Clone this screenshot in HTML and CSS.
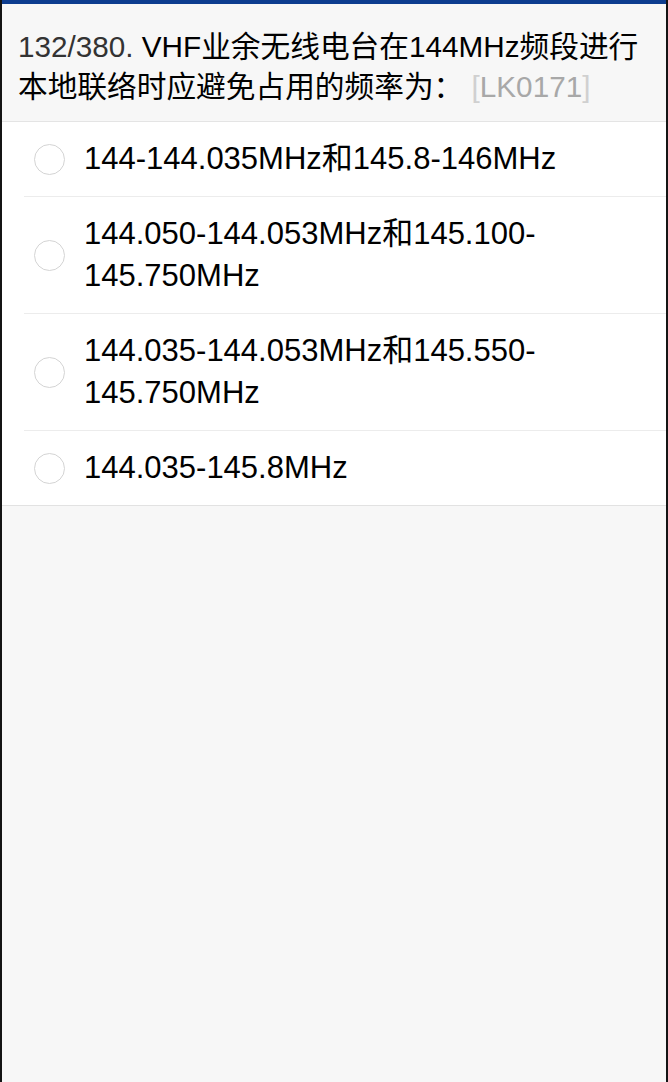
FILE: index.html
```html
<!DOCTYPE html>
<html lang="zh-CN">
<head>
<meta charset="utf-8">
<link rel="stylesheet" href="styles.css">
</head>
<body>
<div class="screen">
  <div class="topbar"></div>
  <div class="question">
    <span class="num">132/380.</span> VHF业余无线电台在144MHz频段进行本地联络时应避免占用的频率为： <span class="code"><span class="br">[</span>LK0171<span class="br">]</span></span>
  </div>
  <ul class="options">
    <li class="option"><span class="radio"></span><span class="label">144-144.035MHz和145.8-146MHz</span></li>
    <li class="option"><span class="radio"></span><span class="label">144.050-144.053MHz和145.100-145.750MHz</span></li>
    <li class="option"><span class="radio"></span><span class="label">144.035-144.053MHz和145.550-145.750MHz</span></li>
    <li class="option"><span class="radio"></span><span class="label">144.035-145.8MHz</span></li>
  </ul>
  <div class="rest"></div>
</div>
</body>
</html>
```

FILE: styles.css
```css
html, body {
  margin: 0;
  padding: 0;
  background: #f7f7f7;
}
.screen {
  display: flex;
  flex-direction: column;
  min-height: 1082px;
  box-sizing: border-box;
  border-left: 2px solid #141414;
  border-right: 2px solid #141414;
  background: #f7f7f7;
  font-family: "Liberation Sans", "Noto Sans CJK SC", sans-serif;
}
.topbar {
  height: 4px;
  background: #0d3d8f;
}
.question {
  padding: 23px 16px 14px 16px;
  font-size: 29.7px;
  line-height: 40px;
  color: #000;
  border-bottom: 1px solid #e4e4e4;
}
.num {
  color: #333;
}
.code {
  color: #a8a8a8;
}
.br {
  color: #d0d0d0;
}
.options {
  list-style: none;
  margin: 0;
  padding: 0;
  background: #fff;
  border-bottom: 1px solid #e2e2e2;
}
.option {
  display: flex;
  align-items: center;
  gap: 19px;
  margin-left: 22px;
  padding: 16px 0 16px 10px;
  border-bottom: 1px solid #ececec;
}
.option:last-child {
  border-bottom: none;
}
.radio {
  flex: none;
  width: 29px;
  height: 29px;
  border: 1.5px solid #d4d4d4;
  border-radius: 50%;
}
.label {
  font-size: 31px;
  line-height: 42px;
  color: #000;
  padding-right: 60px;
}
.rest {
  flex: 1;
}
```
